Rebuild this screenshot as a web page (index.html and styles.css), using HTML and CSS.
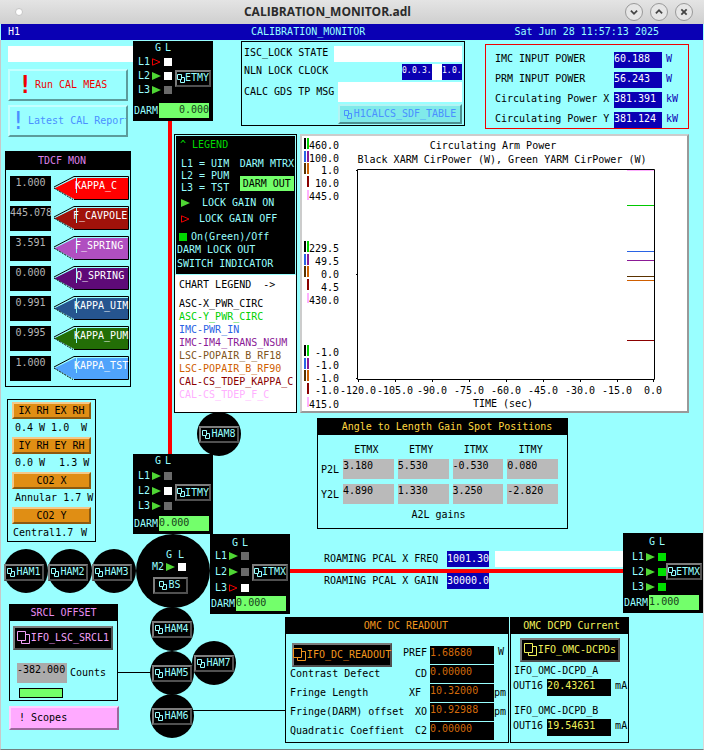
FILE: index.html
```html
<!DOCTYPE html>
<html lang="en">
<head>
<meta charset="utf-8">
<title>CALIBRATION_MONITOR.adl</title>
<link rel="stylesheet" href="styles.css">
</head>
<body>
<svg class="defs" aria-hidden="true">
  <symbol id="rel" viewBox="0 0 8 9"><path d="M.5 .5h4v5h-4zM5 3.500h2.500v5h-4v-2.500" fill="none" stroke="currentColor"/></symbol>
  <symbol id="rel-big" viewBox="0 0 14 14"><path d="M.5 .5h8v9h-8zM9 3.500h3.500v9h-8v-3" fill="none" stroke="currentColor"/></symbol>
  <symbol id="on" viewBox="0 0 9 8"><path d="M0 0v8l9-4z" fill="#4fd634"/></symbol>
  <symbol id="off" viewBox="0 0 9 8"><path d="M.5 .8v6.400l7.500-3.200z" fill="none" stroke="#f00000"/></symbol>
</svg>

<header class="titlebar">
  <span class="dot"></span>
  <h1>CALIBRATION_MONITOR.adl</h1>
  <div class="winbtns">
    <button aria-label="Minimize"><svg viewBox="0 0 18 18"><path d="M5.500 7.500l3.500 3.500l3.500-3.500"/></svg></button>
    <button aria-label="Maximize"><svg viewBox="0 0 18 18"><path d="M5.500 10.500l3.500-3.500l3.500 3.500"/></svg></button>
    <button aria-label="Close"><svg viewBox="0 0 18 18"><path d="M6 6l6 6M12 6l-6 6"/></svg></button>
  </div>
</header>
<div class="headbar"><b>H1</b><span>CALIBRATION_MONITOR</span><time>Sat Jun 28 11:57:13 2025</time></div>

<main class="canvas">
  <div class="side">
    <section class="actions">
      <input class="blank" aria-label="Message" readonly>
      <button class="shell red"><i>!</i>Run CAL MEAS</button>
      <button class="shell blue"><i>!</i>Latest CAL Report</button>
    </section>

    <section class="panel tdcf">
      <h2>TDCF MON</h2>
      <div class="kappa"><output>1.000</output><svg viewBox="0 0 76 26"><path d="M1 12L23 1.500H75V24H23z" fill="#ff0000"/><path class="hl" d="M1 12L22 1.500H75M23.500 1v16"/><path class="ol" d="M1 11L21 .5H75.500V23.500H21"/><path class="ds" d="M1 12L20 23.500"/><text x="22" y="13">KAPPA_C</text></svg></div>
      <div class="kappa"><output>445.078</output><svg viewBox="0 0 76 26"><path d="M1 12L23 1.500H75V24H23z" fill="#a0120a"/><path class="hl" d="M1 12L22 1.500H75M23.500 1v16"/><path class="ol" d="M1 11L21 .5H75.500V23.500H21"/><path class="ds" d="M1 12L20 23.500"/><text x="20" y="13">F_CAVPOLE</text></svg></div>
      <div class="kappa"><output>3.591</output><svg viewBox="0 0 76 26"><path d="M1 12L23 1.500H75V24H23z" fill="#b04fc0"/><path class="hl" d="M1 12L22 1.500H75M23.500 1v16"/><path class="ol" d="M1 11L21 .5H75.500V23.500H21"/><path class="ds" d="M1 12L20 23.500"/><text x="22" y="13">F_SPRING</text></svg></div>
      <div class="kappa"><output>0.000</output><svg viewBox="0 0 76 26"><path d="M1 12L23 1.500H75V24H23z" fill="#5e0a78"/><path class="hl" d="M1 12L22 1.500H75M23.500 1v16"/><path class="ol" d="M1 11L21 .5H75.500V23.500H21"/><path class="ds" d="M1 12L20 23.500"/><text x="23" y="13">Q_SPRING</text></svg></div>
      <div class="kappa"><output>0.991</output><svg viewBox="0 0 76 26"><path d="M1 12L23 1.500H75V24H23z" fill="#26558f"/><path class="hl" d="M1 12L22 1.500H75M23.500 1v16"/><path class="ol" d="M1 11L21 .5H75.500V23.500H21"/><path class="ds" d="M1 12L20 23.500"/><text x="21" y="13">KAPPA_UIM</text></svg></div>
      <div class="kappa"><output>0.995</output><svg viewBox="0 0 76 26"><path d="M1 12L23 1.500H75V24H23z" fill="#236e06"/><path class="hl" d="M1 12L22 1.500H75M23.500 1v16"/><path class="ol" d="M1 11L21 .5H75.500V23.500H21"/><path class="ds" d="M1 12L20 23.500"/><text x="21" y="13">KAPPA_PUM</text></svg></div>
      <div class="kappa"><output>1.000</output><svg viewBox="0 0 76 26"><path d="M1 12L23 1.500H75V24H23z" fill="#4fa3fb"/><path class="hl" d="M1 12L22 1.500H75M23.500 1v16"/><path class="ol" d="M1 11L21 .5H75.500V23.500H21"/><path class="ds" d="M1 12L20 23.500"/><text x="21" y="13">KAPPA_TST</text></svg></div>
    </section>

    <section class="panel heaters">
      <button>IX RH EX RH</button>
      <p><span>0.4</span><span>W</span><span>1.0</span><span class="end">W</span></p>
      <button>IY RH EY RH</button>
      <p><span>0.0</span><span>W</span><span class="wide">1.3</span><span class="end">W</span></p>
      <button>CO2 X</button>
      <p><span>Annular</span><span>1.7</span><span class="end">W</span></p>
      <button>CO2 Y</button>
      <p class="tight"><span>Central</span><span>1.7</span><span class="end">W</span></p>
    </section>

    <section class="panel srcl">
      <h2>SRCL OFFSET</h2>
      <button class="rd big"><svg><use href="#rel-big"/></svg>IFO_LSC_SRCL1</button>
      <div class="counts"><output>-382.000</output><span>Counts</span></div>
      <div class="lamp"></div>
    </section>
    <button class="scopes">! Scopes</button>
  </div>

  <div class="body">
    <div class="top">
      <section class="panel lock">
        <label class="line"><span>ISC_LOCK STATE</span><input class="w128" readonly></label>
        <div class="line"><span>NLN LOCK CLOCK</span><div class="clock"><output>0.</output><output>0.</output><output>3.</output><output class="none"></output><output>1.</output><output>0.</output></div></div>
        <label class="line tall"><span>CALC GDS TP MSG</span><input class="w124" readonly></label>
        <button class="sdf"><svg><use href="#rel"/></svg>H1CALCS_SDF_TABLE</button>
      </section>
      <section class="panel power">
        <div><span>IMC INPUT POWER</span><output>60.188</output><em>W</em></div>
        <div><span>PRM INPUT POWER</span><output>56.243</output><em>W</em></div>
        <div><span>Circulating Power X</span><output>381.391</output><em>kW</em></div>
        <div><span>Circulating Power Y</span><output>381.124</output><em>kW</em></div>
      </section>
    </div>

    <div class="middle">
      <section class="legend">
        <div class="keys">
          <h2>^ LEGEND</h2>
          <div class="stages">
            <ul><li>L1 = UIM</li><li>L2 = PUM</li><li>L3 = TST</li></ul>
            <div><span>DARM MTRX</span><span class="out">DARM OUT</span></div>
          </div>
          <p class="gain"><svg><use href="#on"/></svg><span>LOCK GAIN ON</span></p>
          <p class="gain less"><svg><use href="#off"/></svg><span>LOCK GAIN OFF</span></p>
          <p class="onoff"><i></i>On(Green)/Off</p>
          <p class="dl">DARM LOCK OUT</p>
          <p class="dl">SWITCH INDICATOR</p>
        </div>
        <div class="traces">
          <h3>CHART LEGEND&nbsp; -&gt;</h3>
          <ul>
            <li class="t1">ASC-X_PWR_CIRC</li>
            <li class="t2">ASC-Y_PWR_CIRC</li>
            <li class="t3">IMC-PWR_IN</li>
            <li class="t4">IMC-IM4_TRANS_NSUM</li>
            <li class="t5">LSC-POPAIR_B_RF18</li>
            <li class="t6">LSC-POPAIR_B_RF90</li>
            <li class="t7">CAL-CS_TDEP_KAPPA_C</li>
            <li class="t8">CAL-CS_TDEP_F_C</li>
          </ul>
        </div>
      </section>

      <figure class="chart">
        <svg viewBox="302 136 385 275" role="img" aria-label="Circulating Arm Power strip chart">
          <g text-anchor="middle">
            <text x="493" y="149">Circulating Arm Power</text>
            <text x="502" y="163">Black XARM CirPower (W), Green YARM CirPower (W)</text>
            <text x="503" y="407">TIME (sec)</text>
            <text x="358" y="394">-120.0</text><text x="395" y="394">-105.0</text><text x="432" y="394">-90.0</text><text x="469" y="394">-75.0</text><text x="506" y="394">-60.0</text><text x="543" y="394">-45.0</text><text x="580" y="394">-30.0</text><text x="617" y="394">-15.0</text><text x="653" y="394">0.0</text>
          </g>
          <g text-anchor="end">
            <text x="339" y="149">460.0</text><text x="339" y="162">100.0</text><text x="339" y="174">1.0</text><text x="339" y="187">10.0</text><text x="339" y="200">445.0</text>
            <text x="339" y="252">229.5</text><text x="339" y="265">49.5</text><text x="339" y="278">0.0</text><text x="339" y="291">4.5</text><text x="339" y="304">430.0</text>
            <text x="339" y="356">-1.0</text><text x="339" y="369">-1.0</text><text x="339" y="382">-1.0</text><text x="339" y="394">-1.0</text><text x="339" y="408">415.0</text>
          </g>
          <defs>
            <g id="pens">
              <path d="M304 138h2v11h-2z" fill="#000"/><path d="M307 138h2v11h-2z" fill="#00d000"/>
              <path d="M304 151h2v11h-2z" fill="#2a63e4"/><path d="M307 151h2v11h-2z" fill="#8b1a96"/>
              <path d="M304 163h2v11h-2z" fill="#5a3200"/><path d="M307 163h2v11h-2z" fill="#d06000"/>
              <path d="M307 176h2v11h-2z" fill="#8b0000"/><path d="M307 190h2v10h-2z" fill="#ffb0ff"/>
            </g>
          </defs>
          <use href="#pens"/><use href="#pens" y="103"/><use href="#pens" y="207"/>
          <g fill="none" stroke-width="1">
            <path stroke="#ffb0ff" d="M627 170.500h27"/><path stroke="#00c800" d="M627 205.500h27"/><path stroke="#2a63e4" d="M627 251.500h27"/><path stroke="#8b1a96" d="M627 260.500h27"/><path stroke="#5a3200" d="M627 276.500h27"/><path stroke="#d06000" d="M627 280.500h27"/><path stroke="#8b0000" d="M627 340.500h27"/>
            <path stroke="#000" d="M357.500 169.500h297v210h-297zM356 170.500h2M356 274.500h2M356 378.500h2M358.500 380v2M395.500 380v2M432.500 380v2M469.500 380v2M506.500 380v2M543.500 380v2M580.500 380v2M617.500 380v2M653.500 380v2"/>
          </g>
        </svg>
      </figure>
    </div>

    <section class="panel a2l">
      <h2>Angle to Length Gain Spot Positions</h2>
      <table>
        <tr><td></td><th>ETMX</th><th>ETMY</th><th>ITMX</th><th>ITMY</th></tr>
        <tr><th>P2L</th><td><output>3.180</output></td><td><output>5.530</output></td><td><output>-0.530</output></td><td><output>0.080</output></td></tr>
        <tr><th>Y2L</th><td><output>4.890</output></td><td><output>1.330</output></td><td><output>3.250</output></td><td><output>-2.820</output></td></tr>
      </table>
      <p>A2L gains</p>
    </section>

    <section class="pcal">
      <div><label for="freq">ROAMING PCAL X FREQ</label><input id="freq" class="entry" value="1001.30"><input class="msg" aria-label="PCAL message" readonly></div>
      <div><label for="gain">ROAMING PCAL X GAIN</label><input id="gain" class="entry" value="30000.0"></div>
    </section>

    <div class="readouts">
      <section class="panel omc">
        <h2>OMC DC READOUT</h2>
        <div class="row first"><button class="rd big"><svg><use href="#rel-big"/></svg>IFO_DC_READOUT</button><b>PREF</b><output>1.68680</output><em>W</em></div>
        <div class="row"><span>Contrast Defect</span><b>CD</b><output>0.00000</output><em></em></div>
        <div class="row"><span>Fringe Length</span><b>XF&nbsp;</b><output>10.32000</output><em>pm</em></div>
        <div class="row"><span>Fringe(DARM) offset</span><b>XO</b><output>10.92988</output><em>pm</em></div>
        <div class="row"><span>Quadratic Coeffient</span><b>C2</b><output>0.00000</output><em></em></div>
      </section>
      <section class="panel dcpd">
        <h2>OMC DCPD Current</h2>
        <button class="rd big"><svg><use href="#rel-big"/></svg>IFO_OMC-DCPDs</button>
        <p>IFO_OMC-DCPD_A</p>
        <div><span>OUT16</span><output>20.43261</output><span>mA</span></div>
        <p class="second">IFO_OMC-DCPD_B</p>
        <div><span>OUT16</span><output>19.54631</output><span>mA</span></div>
      </section>
    </div>
  </div>

  <!-- Interferometer diagram: beam lines, chambers and suspensions -->
  <div class="beam y-arm"></div><div class="beam x-arm"></div>
  <div class="wire w5"></div><div class="wire w6"></div>

  <div class="chamber ham1 row-left"><button class="rd"><svg><use href="#rel"/></svg>HAM1</button></div>
  <div class="chamber ham2 row-left"><button class="rd"><svg><use href="#rel"/></svg>HAM2</button></div>
  <div class="chamber ham3 row-left"><button class="rd"><svg><use href="#rel"/></svg>HAM3</button></div>
  <div class="chamber ham4"><button class="rd"><svg><use href="#rel"/></svg>HAM4</button></div>
  <div class="chamber ham5"><button class="rd"><svg><use href="#rel"/></svg>HAM5</button></div>
  <div class="chamber ham6"><button class="rd"><svg><use href="#rel"/></svg>HAM6</button></div>
  <div class="chamber ham7"><button class="rd"><svg><use href="#rel"/></svg>HAM7</button></div>
  <div class="chamber ham8"><button class="rd"><svg><use href="#rel"/></svg>HAM8</button></div>
  <div class="chamber bs">
    <div class="gl"><span></span><b>G</b><b>L</b><span>M2</span><svg><use href="#on"/></svg><i class="sq white"></i></div>
    <button class="rd"><svg><use href="#rel"/></svg>BS</button>
  </div>

  <div class="node etmy">
    <div class="gl"><span></span><b>G</b><b>L</b><span>L1</span><svg><use href="#off"/></svg><i class="sq white"></i><span>L2</span><svg><use href="#on"/></svg><i class="sq white"></i><span>L3</span><svg><use href="#on"/></svg><i class="sq"></i><button class="rd"><svg><use href="#rel"/></svg>ETMY</button></div>
    <div class="darm"><span>DARM</span><output class="right">0.000</output></div>
  </div>
  <div class="node itmy">
    <div class="gl"><span></span><b>G</b><b>L</b><span>L1</span><svg><use href="#on"/></svg><i class="sq"></i><span>L2</span><svg><use href="#on"/></svg><i class="sq white"></i><span>L3</span><svg><use href="#on"/></svg><i class="sq"></i><button class="rd"><svg><use href="#rel"/></svg>ITMY</button></div>
    <div class="darm"><span>DARM</span><output>0.000</output></div>
  </div>
  <div class="node itmx">
    <div class="gl"><span></span><b>G</b><b>L</b><span>L1</span><svg><use href="#on"/></svg><i class="sq"></i><span>L2</span><svg><use href="#on"/></svg><i class="sq"></i><span>L3</span><svg><use href="#off"/></svg><i class="sq white"></i><button class="rd"><svg><use href="#rel"/></svg>ITMX</button></div>
    <div class="darm"><span>DARM</span><output>0.000</output></div>
  </div>
  <div class="node etmx">
    <div class="gl"><span></span><b>G</b><b>L</b><span>L1</span><svg><use href="#on"/></svg><i class="sq green"></i><span>L2</span><svg><use href="#on"/></svg><i class="sq green"></i><span>L3</span><svg><use href="#on"/></svg><i class="sq green"></i><button class="rd"><svg><use href="#rel"/></svg>ETMX</button></div>
    <div class="darm"><span>DARM</span><output>1.000</output></div>
  </div>
</main>
</body>
</html>
```
FILE: styles.css
```css
:root {
  --cyan: #99ffff;
  --navy: #0a00b4;
  --lime: #73ff6b;
  --gold: #f0f05a;
}
* { box-sizing: border-box; margin: 0; padding: 0; }
body, button, input, text {
  font: 10px/12px "DejaVu Sans Mono", "Liberation Mono", monospace;
}
body {
  min-height: 100vh;
  display: flex;
  flex-direction: column;
  background: var(--cyan);
  color: #000;
  white-space: nowrap;
}
b, em, i, h1, h2, h3, th { font-weight: normal; font-style: normal; }
h2, h3 { font-size: 10px; line-height: 12px; }
ul { list-style: none; }
output { display: block; }
button, input { border: 0; border-radius: 0; color: inherit; }
input { background: #fff; min-width: 0; }
.defs { position: absolute; width: 0; height: 0; }

/* window frame */
.titlebar {
  height: 24px;
  display: grid;
  grid-template-columns: 50px 1fr 79px;
  align-items: center;
  background: linear-gradient(#e4e4e4, #cfcfcf);
}
.titlebar h1 {
  font: bold 12px/22px "Open Sans", "Noto Sans", sans-serif;
  color: #2b2b2b;
  text-align: center;
  padding-right: 20px;
}
.dot { width: 8px; height: 8px; margin-left: 15px; border-radius: 50%; background: #fff; border: 1px solid #c4c4c4; }
.winbtns { display: flex; gap: 7px; }
.winbtns button { width: 18px; height: 18px; border-radius: 50%; background: #e6e6e6; border: 1px solid #999; }
.winbtns svg { display: block; width: 16px; height: 16px; fill: none; stroke: #444; stroke-width: 2; }
.headbar {
  height: 16px;
  display: grid;
  grid-template-columns: 243px 1fr auto;
  margin: 0 1px;
  padding: 0 44px 0 7px;
  line-height: 15px;
  background: var(--navy);
  color: var(--cyan);
}
.headbar b { color: #fff; }

.canvas {
  position: relative;
  flex: 1;
  display: grid;
  grid-template-columns: 173px 1fr;
  border-left: 1px solid #c8c8c8;
  border-right: 1px solid #d8d8d8;
  border-bottom: 1px solid #708080;
}
.panel { border: 1px solid #000; }
.panel h2 { background: #000; text-align: center; height: 16px; line-height: 16px; }

/* left column */
.side { display: flex; flex-direction: column; align-items: flex-start; }
.actions { display: flex; flex-direction: column; gap: 4px; padding: 6px 0 14px 7px; }
.blank { width: 128px; height: 16px; margin-bottom: 3px; }
.shell {
  width: 120px;
  height: 32px;
  overflow: hidden;
  display: flex;
  align-items: center;
  gap: 7px;
  padding-left: 12px;
  background: var(--cyan);
  border: 2px solid;
  border-color: #c4ffff #5c9c9c #5c9c9c #c4ffff;
}
.shell i { font-size: 24px; line-height: 24px; width: 6px; text-indent: -4px; }
.red { color: #f00000; }
.red i { font-weight: bold; }
.blue { color: #4a90ff; padding-left: 5px; }

.tdcf { width: 126px; margin-left: 4px; }
.tdcf h2 { height: 18px; line-height: 18px; padding-right: 12px; color: #dd80e8; margin-bottom: 6px; }
.kappa { display: flex; gap: 2px; height: 30px; padding-left: 4px; }
.kappa output { width: 41px; height: 25px; background: #000; color: #b4b4b4; text-align: center; line-height: 14px; }
.kappa svg { width: 76px; height: 26px; overflow: visible; }
.kappa text { fill: #fff; }
.kappa .hl { fill: none; stroke: var(--cyan); }
.kappa .ol { fill: none; stroke: #000; }
.kappa .ds { fill: none; stroke: #000; stroke-dasharray: 2 1; }

.heaters { width: 89px; margin: 12px 0 62px 6px; padding: 2px 4px 1px; }
.heaters button {
  display: block;
  width: 79px;
  height: 17px;
  background: #e08e14;
  border: 2px solid;
  border-color: #f4c888 #8c5a10 #8c5a10 #f4c888;
}
.heaters p { display: flex; gap: 6px; height: 18px; line-height: 16px; padding: 1px 4px 0 3px; }
.heaters .end { margin-left: auto; }
.heaters .wide { margin-left: 8px; }
.heaters .tight { gap: 0; height: 16px; padding-left: 1px; }

.srcl { width: 109px; margin-left: 8px; padding: 0 0 2px; }
.srcl h2 { color: #e68cf0; }
.srcl .rd { margin: 5px 3px 13px; color: #f0a0f8; }
.counts { display: flex; gap: 3px; align-items: center; padding-left: 7px; }
.counts output { width: 50px; height: 20px; line-height: 14px; background: #ababab; }
.lamp { width: 44px; height: 10px; margin: 5px 0 0 9px; background: var(--lime); border: 1px solid #000; }
.scopes {
  width: 110px;
  height: 24px;
  margin: 5px 0 0 8px;
  padding-left: 8px;
  text-align: left;
  background: #ffaaff;
  border: 2px solid;
  border-color: #ffd0ff #9c689c #9c689c #ffd0ff;
}

/* related-display buttons */
.rd {
  display: flex;
  align-items: center;
  justify-content: center;
  gap: 1px;
  width: 40px;
  height: 17px;
  background: #000;
  color: var(--cyan);
  border: 2px solid;
  border-color: #7c7c7c #505050 #505050 #7c7c7c;
}
.rd svg { flex: none; width: 8px; height: 9px; }
.rd.big { width: 100px; height: 24px; gap: 0; }
.rd.big svg { width: 14px; height: 14px; }

/* right column */
.body { display: flex; flex-direction: column; padding-right: 14px; min-width: 0; }
.top { display: flex; gap: 20px; padding: 1px 0 0 67px; }
.lock { width: 224px; height: 85px; padding: 4px 2px 0 2px; display: flex; flex-direction: column; gap: 2px; }
.line { display: flex; justify-content: space-between; height: 16px; line-height: 14px; }
.w128 { width: 128px; }
.w124 { width: 124px; }
.tall { height: 20px; line-height: 20px; }
.clock { display: flex; background: var(--navy); color: #fff; font-size: 8px; }
.clock output { width: 10px; height: 16px; }
.clock .none { background: #fff; }
.sdf {
  display: flex;
  align-items: center;
  justify-content: center;
  gap: 2px;
  width: 124px;
  height: 20px;
  align-self: flex-end;
  background: #80eaea;
  color: #4a90ff;
  border: 2px solid;
  border-color: #b4f4f4 #4c9090 #4c9090 #b4f4f4;
}
.sdf svg { width: 8px; height: 9px; }
.power { flex: 1; height: 85px; margin-top: 3px; padding: 7px 8px 0 9px; border-color: #f00000; display: flex; flex-direction: column; gap: 4px; }
.power div { display: grid; grid-template-columns: 1fr 48px 14px; column-gap: 4px; height: 16px; line-height: 14px; }
.power output { background: var(--navy); color: #fff; }
.power em { color: var(--navy); }

.middle { display: flex; gap: 3px; margin-top: 5px; }
.legend { width: 123px; height: 279px; border: 1px solid #000; background: #fff; }
.keys { height: 140px; background: #000; color: var(--cyan); outline: 1px solid var(--cyan); outline-offset: -1px; padding: 4px 2px 0; }
.keys h2 { color: #00d800; padding-left: 3px; margin-bottom: 7px; }
.stages { display: flex; justify-content: space-between; padding-left: 4px; }
.stages div { display: flex; flex-direction: column; gap: 6px; }
.stages .out { width: 54px; height: 15px; line-height: 15px; text-align: center; background: var(--lime); color: #000; }
.gain { display: flex; align-items: center; gap: 12px; margin: 3px 0 4px 4px; }
.less { gap: 9px; }
.gain svg { width: 9px; height: 8px; }
.onoff { display: flex; align-items: center; gap: 4px; margin: 6px 0 1px 2px; }
.onoff i { width: 8px; height: 8px; background: #00d800; }
.dl { height: 14px; }
.traces { padding: 4px 0 0 4px; }
.traces h3 { margin-bottom: 6px; }
.traces li { height: 13px; line-height: 13px; }
.t2 { color: #00d000; } .t3 { color: #2a63e4; } .t4 { color: #8b1a96; } .t5 { color: #805420; }
.t6 { color: #d06000; } .t7 { color: #8b0000; } .t8 { color: #ffb0ff; }
.chart { flex: 1; min-width: 0; background: #fff; border: 2px solid; border-color: #ccc #999 #999 #ccc; }
.chart svg { display: block; width: 100%; }

.a2l { width: 251px; height: 111px; margin: 5px 0 0 143px; }
.a2l h2 { color: #ffd840; padding-left: 9px; }
.a2l table { border-collapse: collapse; table-layout: fixed; width: 240px; }
.a2l tr { height: 25px; }
.a2l tr:first-child { height: 21px; }
.a2l tr:first-child td { width: 21px; }
.a2l tr > th:first-child { text-align: right; padding-top: 2px; }
.a2l tr:first-child th { padding: 8px 0 0; text-align: center; line-height: 12px; }
.a2l td { padding: 0 0 0 4px; }
.a2l td output { height: 20px; line-height: 13px; background: #bababa; }
.a2l p { text-align: center; padding: 3px 8px 0 0; }

.pcal { display: flex; flex-direction: column; gap: 6px; margin: 22px 65px 0 150px; }
.pcal div { display: flex; height: 16px; line-height: 16px; }
.pcal label { width: 123px; }
.entry { width: 42px; height: 16px; padding-bottom: 2px; background: var(--navy); color: #fff; }
.msg { flex: 1; height: 16px; margin-left: 6px; }

.readouts { display: flex; gap: 1px; margin: 28px 0 0 111px; }
.omc { width: 224px; height: 126px; }
.omc h2 { color: #f0961e; padding-left: 18px; }
.omc .rd { color: #f0961e; flex: none; }
.omc .row { display: flex; height: 19px; line-height: 17px; padding-left: 4px; }
.omc .first { padding: 9px 0 0 6px; height: 31px; line-height: 15px; }
.omc .row span { width: 114px; }
.omc .row b { width: 23px; text-align: right; }
.omc .first b { width: 35px; padding-top: 2px; }
.omc output { width: 64px; height: 18px; line-height: 13px; margin: 0 0 0 3px; background: #000; color: #d26a0a; flex: none; }
.omc .first output { margin-top: 3px; }
.omc .first em { padding: 1px 0 0 4px; }
.dcpd { width: 119px; height: 126px; }
.dcpd h2 { color: var(--gold); padding-left: 4px; }
.dcpd .rd { margin: 4px 0 3px 9px; color: var(--gold); }
.dcpd p { padding-left: 3px; height: 14px; }
.dcpd .second { margin-top: 10px; }
.dcpd div { display: flex; gap: 4px; padding-left: 2px; height: 16px; line-height: 14px; }
.dcpd output { width: 64px; height: 17px; background: #000; color: var(--gold); line-height: 13px; }

/* diagram */
.beam, .wire, .chamber, .node { position: absolute; }
.beam { background: #ff0000; }
.y-arm { left: 167px; top: 80px; width: 4px; height: 335px; }
.x-arm { left: 288px; right: 79px; top: 529px; height: 4px; }
.wire { height: 1px; background: #000; }
.w5 { left: 117px; top: 632px; width: 34px; }
.w6 { left: 192px; top: 670px; width: 92px; }
.chamber {
  width: 44px;
  height: 44px;
  border-radius: 50%;
  background: #000;
  color: var(--cyan);
  display: flex;
  flex-direction: column;
  align-items: center;
  justify-content: center;
}
.row-left { align-items: flex-start; padding-top: 2px; }
.ham1 { left: 3px; top: 509px; }
.ham2 { left: 47px; top: 509px; }
.ham3 { left: 91px; top: 509px; }
.ham4 { left: 149px; top: 567px; }
.ham5 { left: 149px; top: 611px; }
.ham6 { left: 149px; top: 654px; }
.ham7 { left: 191px; top: 601px; }
.ham8 { left: 196px; top: 372px; }
.bs { left: 135px; top: 494px; width: 74px; height: 74px; padding-right: 6px; }
.bs .rd { width: 35px; margin-top: 4px; }
.bs .gl { grid-template-rows: 12px 12px; }

.node { width: 80px; height: 80px; background: #000; color: var(--cyan); display: flex; flex-direction: column; justify-content: space-between; padding-bottom: 3px; }
.gl { display: grid; grid-template-columns: 14px 12px 10px; grid-template-rows: 14px; grid-auto-rows: 14px; align-items: center; }
.node .gl { grid-template-columns: 14px 12px 8px 35px; column-gap: 0; padding-left: 5px; }
.node .gl > span { grid-column: 1; }
.node .gl > b { text-align: center; }
.gl > svg { width: 9px; height: 8px; }
.sq { width: 8px; height: 8px; background: #6a6a6a; }
.sq.white { background: #fff; }
.sq.green { background: #00e000; }
.node .rd { width: 36px; grid-column: 4; grid-row: 2 / 5; margin: 4px 0 0 3px; gap: 0; }
.darm { display: flex; gap: 1px; padding-left: 1px; line-height: 15px; }
.darm output { width: 50px; height: 15px; line-height: 13px; background: var(--lime); color: #16401a; }
.darm .right { text-align: right; }
.etmy { left: 132px; top: 1px; }
.itmy { left: 132px; top: 414px; }
.itmx { left: 209px; top: 494px; }
.etmx { right: 0; top: 493px; }
.itmy .gl, .etmx .gl { grid-auto-rows: 15px; }
.itmx .gl { grid-template-rows: 11px; grid-auto-rows: 16px; padding-top: 3px; }
.itmx .rd { margin-top: 0; }
.etmx .gl { padding: 2px 0 0 9px; }
.etmx .rd { margin: 0; }
```
